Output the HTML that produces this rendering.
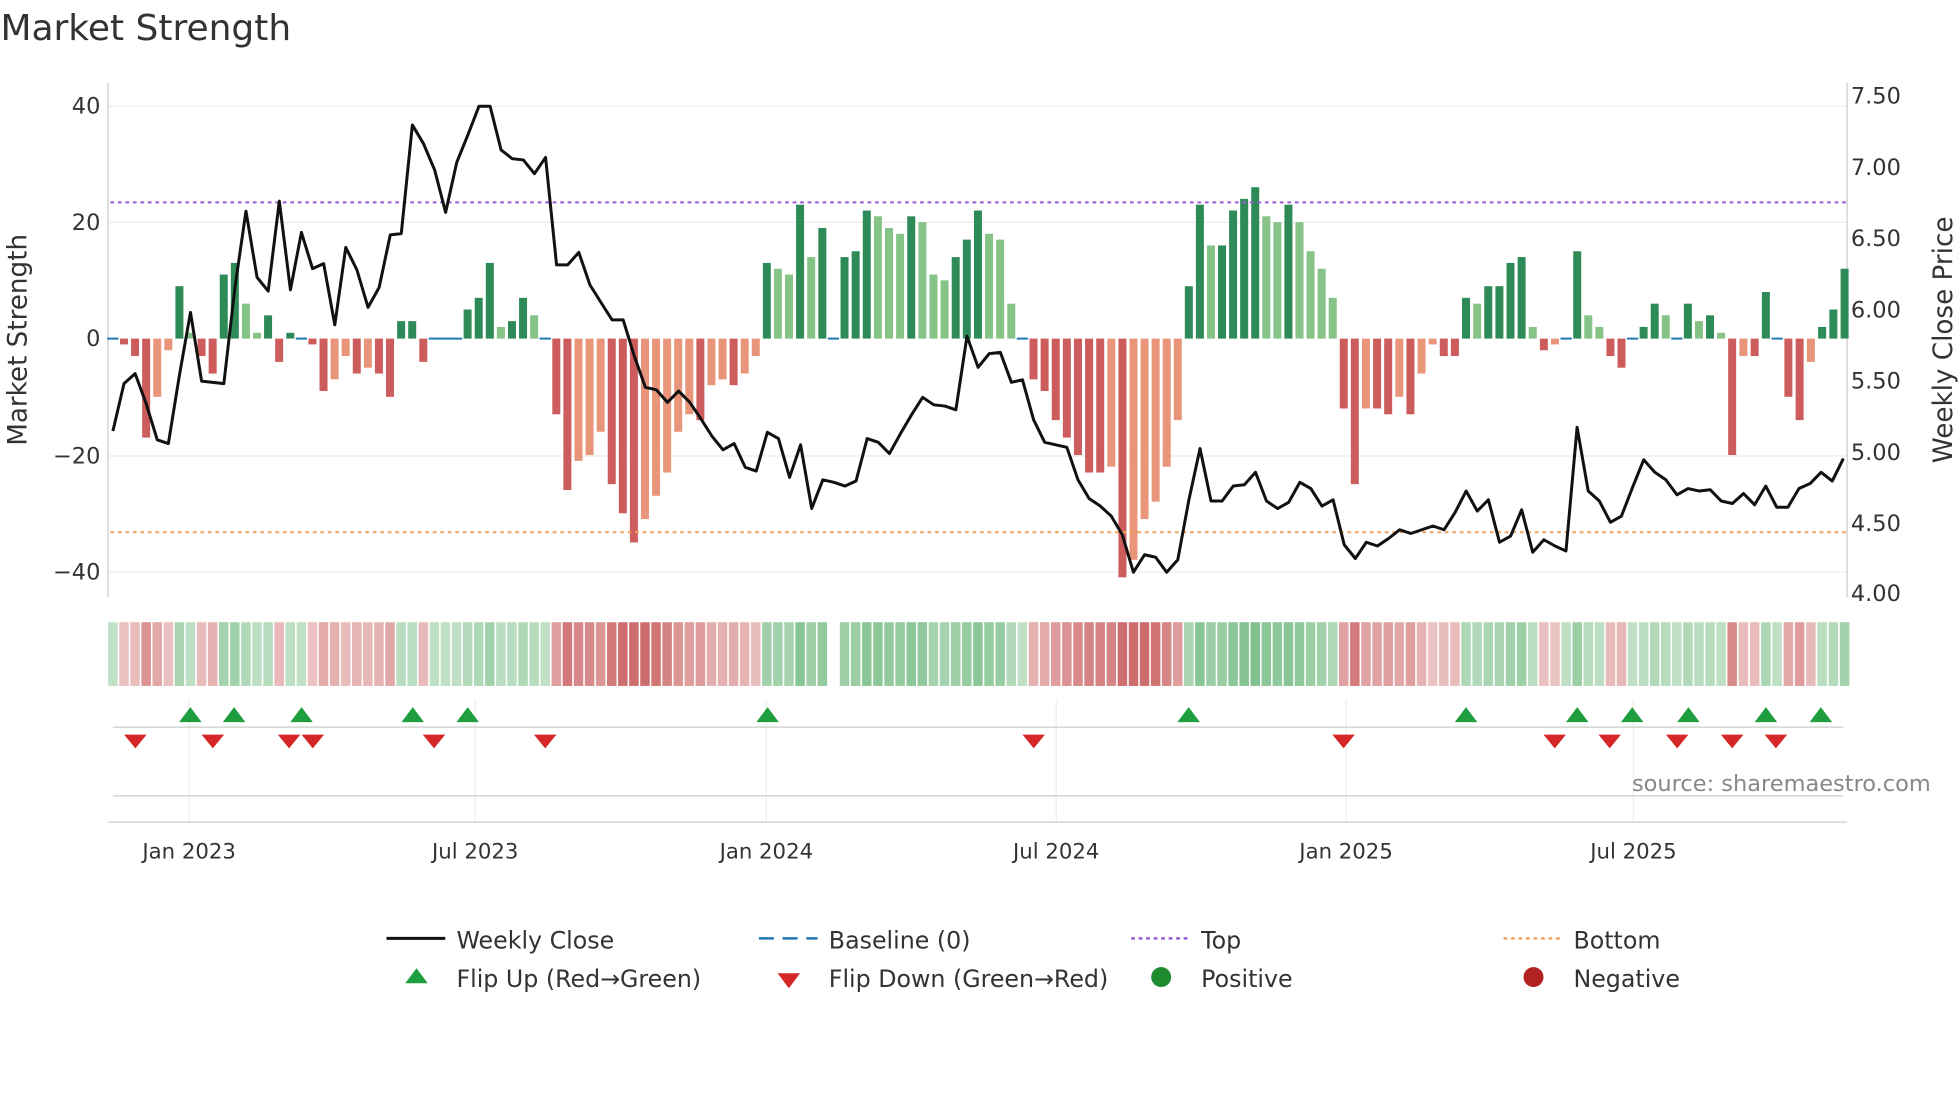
<!DOCTYPE html>
<html><head><meta charset="utf-8"><style>
html,body{margin:0;padding:0;background:#fff;width:1960px;height:1102px;overflow:hidden}
svg{display:block;font-family:"DejaVu Sans","Liberation Sans",sans-serif}
</style></head><body>
<svg id="s" width="1960" height="1102" viewBox="0 0 1568 882" xmlns="http://www.w3.org/2000/svg">
<rect width="1568" height="882" fill="#fff"/>
<text x="0" y="32" font-size="28.8" fill="#333">Market Strength</text>
<g id="grid" stroke="#ebebeb" stroke-width="1">
<line x1="86" x2="1478" y1="85" y2="85"/><line x1="86" x2="1478" y1="178" y2="178"/>
<line x1="86" x2="1478" y1="365" y2="365"/><line x1="86" x2="1478" y1="458" y2="458"/>
</g>
<line x1="86" y1="66" x2="86" y2="478" stroke="#ccc"/>
<line x1="1478" y1="66" x2="1478" y2="478" stroke="#ccc"/>
<g font-size="18" fill="#333" text-anchor="end">
<text x="80" y="91">40</text><text x="80" y="184">20</text><text x="80" y="277">0</text><text x="80" y="371">−20</text><text x="80" y="464">−40</text>
</g>
<g font-size="18" fill="#333">
<text x="1481" y="83">7.50</text><text x="1481" y="140">7.00</text><text x="1481" y="197">6.50</text><text x="1481" y="254">6.00</text><text x="1481" y="311">5.50</text><text x="1481" y="368">5.00</text><text x="1481" y="425">4.50</text><text x="1481" y="481">4.00</text>
</g>
<text transform="translate(21,272) rotate(-90)" font-size="21" fill="#333" text-anchor="middle">Market Strength</text>
<text transform="translate(1562,272) rotate(-90)" font-size="21" fill="#333" text-anchor="middle">Weekly Close Price</text>
<g id="bars"></g>
<line x1="88" x2="1478" y1="162" y2="162" stroke="#9b59d6" stroke-width="1.6" stroke-dasharray="3,3"/>
<line x1="88" x2="1478" y1="426" y2="426" stroke="#f0a35a" stroke-width="1.6" stroke-dasharray="3,3"/>
<g id="heat"></g>
<g stroke="#eee"><line x1="151" x2="151" y1="560" y2="658"/><line x1="380" x2="380" y1="560" y2="658"/><line x1="613" x2="613" y1="560" y2="658"/><line x1="845" x2="845" y1="560" y2="658"/><line x1="1077" x2="1077" y1="560" y2="658"/><line x1="1307" x2="1307" y1="560" y2="658"/></g>
<line x1="90" x2="1475" y1="582" y2="582" stroke="#ccc"/>
<line x1="90" x2="1475" y1="637" y2="637" stroke="#ccc"/>
<line x1="86" x2="1478" y1="658" y2="658" stroke="#ccc"/>
<g id="tri"></g>
<text x="1545" y="633" font-size="18" fill="#888" text-anchor="end">source: sharemaestro.com</text>
<g font-size="17" fill="#333" text-anchor="middle">
<text x="151" y="687">Jan 2023</text><text x="380" y="687">Jul 2023</text><text x="613" y="687">Jan 2024</text><text x="845" y="687">Jul 2024</text><text x="1077" y="687">Jan 2025</text><text x="1307" y="687">Jul 2025</text>
</g>
<path id="line" fill="none" stroke="#111" stroke-width="2.4" stroke-linejoin="round"/>
<g font-size="19" fill="#333">
<line x1="309" x2="356" y1="751" y2="751" stroke="#111" stroke-width="2.4"/><text x="365" y="759">Weekly Close</text>
<line x1="607" x2="654" y1="751" y2="751" stroke="#1f77b4" stroke-width="2" stroke-dasharray="12,7"/><text x="663" y="759">Baseline (0)</text>
<line x1="905" x2="952" y1="751" y2="751" stroke="#9b59d6" stroke-width="2" stroke-dasharray="3,3"/><text x="961" y="759">Top</text>
<line x1="1203" x2="1250" y1="751" y2="751" stroke="#f0a35a" stroke-width="2" stroke-dasharray="3,3"/><text x="1259" y="759">Bottom</text>
<path d="M324,787 L342,787 L333,775 Z" fill="#1e9e3e"/><text x="365" y="790">Flip Up (Red→Green)</text>
<path d="M622,779 L640,779 L631,791 Z" fill="#d62728"/><text x="663" y="790">Flip Down (Green→Red)</text>
<circle cx="929" cy="782" r="8" fill="#1e8c2e"/><text x="961" y="790">Positive</text>
<circle cx="1227" cy="782" r="8" fill="#b22222"/><text x="1259" y="790">Negative</text>
</g>
</svg>
<script>
var v=[0,-1,-3,-17,-10,-2,9,1,-3,-6,11,13,6,1,4,-4,1,0,-1,-9,-7,-3,-6,-5,-6,-10,3,3,-4,0,0,0,5,7,13,2,3,7,4,0,-13,-26,-21,-20,-16,-25,-30,-35,-31,-27,-23,-16,-13,-14,-8,-7,-8,-6,-3,13,12,11,23,14,19,0,14,15,22,21,19,18,21,20,11,10,14,17,22,18,17,6,0,-7,-9,-14,-17,-20,-23,-23,-22,-41,-38,-31,-28,-22,-14,9,23,16,16,22,24,26,21,20,23,20,15,12,7,-12,-25,-12,-12,-13,-10,-13,-6,-1,-3,-3,7,6,9,9,13,14,2,-2,-1,0,15,4,2,-3,-5,0,2,6,4,0,6,3,4,1,-20,-3,-3,8,0,-10,-14,-4,2,5,12];
var NS="http://www.w3.org/2000/svg",b=document.getElementById('bars'),h=document.getElementById('heat');
function el(p,t,a){var e=document.createElementNS(NS,t);for(var k in a)e.setAttribute(k,a[k]);p.appendChild(e);return e;}
var n=v.length;
var A=[[0,90],[47,507],[62,640],[91,898],[112,1084],[132,1262],[146,1386],[n-1,1476]];
function X(i){for(var k=1;k<A.length;k++){if(i<=A[k][0]){var a=A[k-1],c=A[k];return a[1]+(i-a[0])*(c[1]-a[1])/(c[0]-a[0]);}}return 1476;}
for(var i=0;i<n;i++){var x=X(i),val=v[i],p=i?v[i-1]:0,c;
 if(val>0)c=val>=p?'#2e8b57':'#86c386';else c=val<=p?'#cd5c5c':'#e8957a';
 if(val!=0){var y0=271,y1=271-val*4.66;el(b,'rect',{x:x-3.2,y:Math.min(y0,y1),width:6.4,height:Math.abs(y1-y0),fill:c});}
 else el(b,'line',{x1:x-4.5,x2:x+4.5,y1:271,y2:271,stroke:'#1f77b4','stroke-width':1.6});
 if(Math.abs(x-665)>4){var a=Math.min(1,0.25+Math.abs(val)/40),hc=val>=0?'rgba(60,160,80,'+(0.2+0.5*a)+')':'rgba(190,60,60,'+(0.15+0.6*a)+')';
 el(h,'rect',{x:x-3.8,y:498,width:7.6,height:51,fill:hc});}
}
var up=[152,187,241,330,374,614,951,1173,1262,1306,1351,1413,1457],dn=[108,170,231,250,347,436,827,1075,1244,1288,1342,1386,1421],t=document.getElementById('tri');
up.forEach(function(x){el(t,'path',{d:'M'+(x-9)+',578 L'+(x+9)+',578 L'+x+',566 Z',fill:'#1e9e3e'});});
dn.forEach(function(x){el(t,'path',{d:'M'+(x-9)+',588 L'+(x+9)+',588 L'+x+',599 Z',fill:'#d62728'});});
var L=[345,307,299,323,352,355,300,250,305,306,307,230,169,222,233,161,232,186,215,211,260,198,216,246,230,188,187,100,115,136,170,130,108,85,85,120,127,128,139,126,212,212,202,228,242,256,256,285,310,312,322,313,322,335,349,360,355,374,377,346,351,382,356,407,384,386,389,385,351,354,363,347,332,318,324,325,328,269,294,283,282,306,304,336,354,356,358,384,399,405,413,428,458,444,446,458,448,400,359,401,401,389,388,378,401,407,402,386,391,405,400,436,447,434,437,431,424,427,424,421,424,410,393,409,400,434,429,408,442,432,437,441,342,393,401,418,413,390,368,378,384,396,391,393,392,401,403,395,404,389,406,406,391,387,378,385,367];
var d='',s2=(1475-90)/(L.length-1);for(var j=0;j<L.length;j++)d+=(j?'L':'M')+(90+j*s2).toFixed(1)+','+L[j]+' ';
document.getElementById('line').setAttribute('d',d);
</script>
</body></html>
